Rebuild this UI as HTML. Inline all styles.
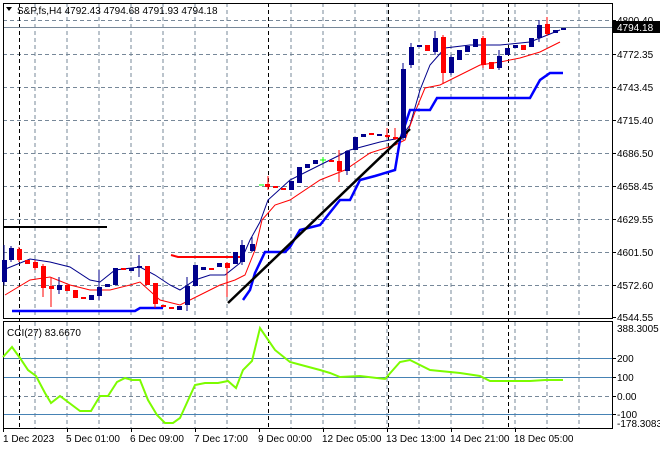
<!DOCTYPE html><html><head><style>body{margin:0;background:#fff}svg{display:block}text{font-family:"Liberation Sans",sans-serif;font-size:10px;fill:#000}</style></head><body>
<svg width="660" height="450" viewBox="0 0 660 450" xmlns="http://www.w3.org/2000/svg">
<rect width="660" height="450" fill="#fff"/>
<g stroke="#778899" stroke-width="1" stroke-dasharray="4,3" fill="none">
<path d="M35 3V318M67 3V318M99 3V318M131 3V318M163 3V318M195 3V318M227 3V318M291 3V318M323 3V318M355 3V318M387 3V318M419 3V318M451 3V318M483 3V318M515 3V318M547 3V318M579 3V318"/>
<path d="M35 322V428M67 322V428M99 322V428M131 322V428M163 322V428M195 322V428M227 322V428M291 322V428M323 322V428M355 322V428M387 322V428M419 322V428M451 322V428M483 322V428M515 322V428M547 322V428M579 322V428"/>
<path d="M3 20.5H612M3 54.5H612M3 87.5H612M3 120.5H612M3 153.5H612M3 186.5H612M3 219.5H612M3 252.5H612M3 285.5H612M3 396.5H612"/>
</g>
<g stroke="#000" stroke-dasharray="4,3"><path d="M19.5 3V428M268.5 3V428M388.5 3V428M508.5 3V428"/></g>
<path d="M3 27.5H612" stroke="#778899"/>
<g stroke="#4682b4"><path d="M3 358.5H612M3 377.5H612M3 414.5H612"/></g>
<rect x="3.5" y="3.5" width="609" height="315" fill="none" stroke="#000"/>
<rect x="3.5" y="321.5" width="609" height="107" fill="none" stroke="#000"/>
<path d="M3 227H107" stroke="#000" stroke-width="2"/>
<path d="M171 255L178 257H245" stroke="#f00" stroke-width="2" fill="none"/>
<polyline fill="none" stroke="#00008b" points="3,270 30,259 50,262 70,267 90,280 100,282 115,270 140,267 155,275 170,285 180,290 195,280 210,275 225,275 240,263 250,240 260,222 268,200 290,180 310,170 330,160 350,150 380,142 400,138 410,125 420,90 430,65 445,48 470,45 500,45 530,42 560,30"/>
<polyline fill="none" stroke="#f00" points="5,295 30,280 50,277 70,285 90,290 110,290 130,285 140,282 160,300 180,305 200,295 220,285 235,280 245,275 255,250 262,220 275,205 290,200 320,180 345,170 370,153 395,145 405,140 415,112 425,88 440,85 460,75 480,65 500,62 520,58 540,52 560,42"/>
<polyline fill="none" stroke="#00f" stroke-width="2.5" points="12,311 135,311 140,308 163,308"/>
<polyline fill="none" stroke="#00f" stroke-width="2.5" points="243,300 250,290 255,273 265,252 285,252 290,247 300,230 320,225 340,200 350,200 360,180 375,176 395,170 400,140 410,110 430,110 437,98 530,98 540,80 550,73 563,73"/>
<path d="M228 303L410 129" stroke="#000" stroke-width="2.5"/>
<g>
<path stroke="#00008b" d="M4 245V285M11 246V262M59 277V294M99 270V300M139 255V277M187 277V311M242 240V265M252 237V252M347 150V175M403 63V140M411 43V68M435 31V55M539 20V42M451 55V75M499 50V70" />
<path stroke="#f00" d="M19 247V262M35 260V270M43 264V297M51 277V307M155 283V308M227 262V297M268 176V190M339 150V182M387 128V138M395 128V140M443 35V84M483 36V68M547 17V36"/>
</g>
<g fill="#00008b">
<rect x="2" y="260" width="5" height="22"/><rect x="9" y="248" width="5" height="12"/><rect x="57" y="285" width="5" height="5"/><rect x="89" y="295" width="5" height="5"/><rect x="97" y="287" width="5" height="9"/><rect x="105" y="284" width="5" height="3"/><rect x="113" y="268" width="5" height="17"/><rect x="129" y="268" width="5" height="3"/><rect x="137" y="266" width="5" height="2"/><rect x="177" y="306" width="5" height="4"/><rect x="185" y="286" width="5" height="19"/><rect x="193" y="265" width="5" height="21"/><rect x="201" y="267" width="5" height="3"/><rect x="217" y="263" width="5" height="4"/><rect x="233" y="252" width="5" height="12"/><rect x="240" y="245" width="5" height="17"/><rect x="250" y="244" width="5" height="7"/><rect x="289" y="181" width="5" height="9"/><rect x="297" y="167" width="5" height="16"/><rect x="305" y="164" width="5" height="4"/><rect x="313" y="160" width="5" height="4"/><rect x="345" y="151" width="5" height="20"/><rect x="353" y="137" width="5" height="13"/><rect x="361" y="134" width="5" height="3"/><rect x="377" y="134" width="5" height="2"/><rect x="401" y="69" width="5" height="69"/><rect x="409" y="47" width="5" height="18"/><rect x="417" y="45" width="5" height="2"/><rect x="433" y="38" width="5" height="14"/><rect x="449" y="57" width="5" height="16"/><rect x="457" y="50" width="5" height="10"/><rect x="465" y="46" width="5" height="6"/><rect x="473" y="39" width="5" height="8"/><rect x="497" y="56" width="5" height="12"/><rect x="505" y="48" width="5" height="7"/><rect x="513" y="45" width="5" height="3"/><rect x="529" y="38" width="5" height="9"/><rect x="537" y="25" width="5" height="13"/><rect x="553" y="30" width="5" height="3"/><rect x="561" y="28" width="5" height="2"/>
</g>
<g fill="#f00">
<rect x="17" y="249" width="5" height="11"/><rect x="25" y="260" width="5" height="4"/><rect x="33" y="262" width="5" height="6"/><rect x="41" y="266" width="5" height="22"/><rect x="49" y="286" width="5" height="3"/><rect x="65" y="285" width="5" height="6"/><rect x="73" y="290" width="5" height="8"/><rect x="81" y="297" width="5" height="2"/><rect x="121" y="268" width="5" height="2"/><rect x="145" y="266" width="5" height="19"/><rect x="153" y="283" width="5" height="21"/><rect x="161" y="305" width="5" height="2"/><rect x="169" y="307" width="5" height="2"/><rect x="209" y="268" width="5" height="2"/><rect x="225" y="263" width="5" height="5"/><rect x="265" y="184" width="5" height="3"/><rect x="273" y="186" width="5" height="2"/><rect x="281" y="188" width="5" height="2"/><rect x="329" y="160" width="5" height="2"/><rect x="337" y="161" width="5" height="10"/><rect x="369" y="133" width="5" height="2"/><rect x="385" y="135" width="5" height="2"/><rect x="393" y="137" width="5" height="2"/><rect x="425" y="45" width="5" height="6"/><rect x="441" y="37" width="5" height="36"/><rect x="481" y="38" width="5" height="27"/><rect x="489" y="62" width="5" height="7"/><rect x="521" y="45" width="5" height="5"/><rect x="545" y="24" width="5" height="10"/>
</g>
<path d="M320 160H326M323 157V163M259 185H264" stroke="#0f0"/>
<polyline fill="none" stroke="#7cfc00" stroke-width="2" points="3,357 12,347 20,358 28,370 36,376 45,393 51,403 60,396 68,402 80,411 91,411 100,396 108,396 117,382 125,378 132,380 140,380 148,400 157,415 165,423 173,423 180,418 195,385 205,383 218,383 228,381 236,388 243,370 252,361 260,328 275,350 290,362 305,366 320,370 330,373 340,377 360,376 385,379 400,362 410,360 430,370 460,373 480,376 490,381 530,381 545,380 563,380"/>
<path d="M6 7L12 7L9 11Z" fill="#000"/>
<text x="17" y="14">S&amp;P,fs,H4  4792.43 4794.68 4791.93 4794.18</text>
<text x="7" y="336">CCI(27) 83.6670</text>
<g>
<text x="617" y="24">4800.40</text>
<rect x="613" y="21" width="47" height="12" fill="#000"/><text x="617" y="31" style="fill:#fff">4794.18</text>
<text x="617" y="58">4772.35</text><text x="617" y="91">4743.45</text><text x="617" y="124">4715.40</text><text x="617" y="157">4686.50</text><text x="617" y="190">4658.45</text><text x="617" y="223">4629.55</text><text x="617" y="256">4601.50</text><text x="617" y="289">4572.60</text><text x="617" y="321">4544.55</text>
<text x="617" y="332">388.3005</text><text x="617" y="362">200</text><text x="617" y="381">100</text><text x="617" y="400">0.00</text><text x="617" y="418">-100</text><text x="617" y="427">-178.3083</text>
</g>
<g stroke="#000"><path d="M612 20.5h4M612 54.5h4M612 87.5h4M612 120.5h4M612 153.5h4M612 186.5h4M612 219.5h4M612 252.5h4M612 285.5h4M612 317.5h4M612 358.5h4M612 377.5h4M612 396.5h4M612 414.5h4M3.5 428v4M67.5 428v4M131.5 428v4M195.5 428v4M259.5 428v4M323.5 428v4M387.5 428v4M451.5 428v4M515.5 428v4"/></g>
<text x="3" y="442">1 Dec 2023</text><text x="66" y="442">5 Dec 01:00</text><text x="130" y="442">6 Dec 09:00</text><text x="194" y="442">7 Dec 17:00</text><text x="258" y="442">9 Dec 00:00</text><text x="322" y="442">12 Dec 05:00</text><text x="386" y="442">13 Dec 13:00</text><text x="450" y="442">14 Dec 21:00</text><text x="514" y="442">18 Dec 05:00</text>
</svg></body></html>
